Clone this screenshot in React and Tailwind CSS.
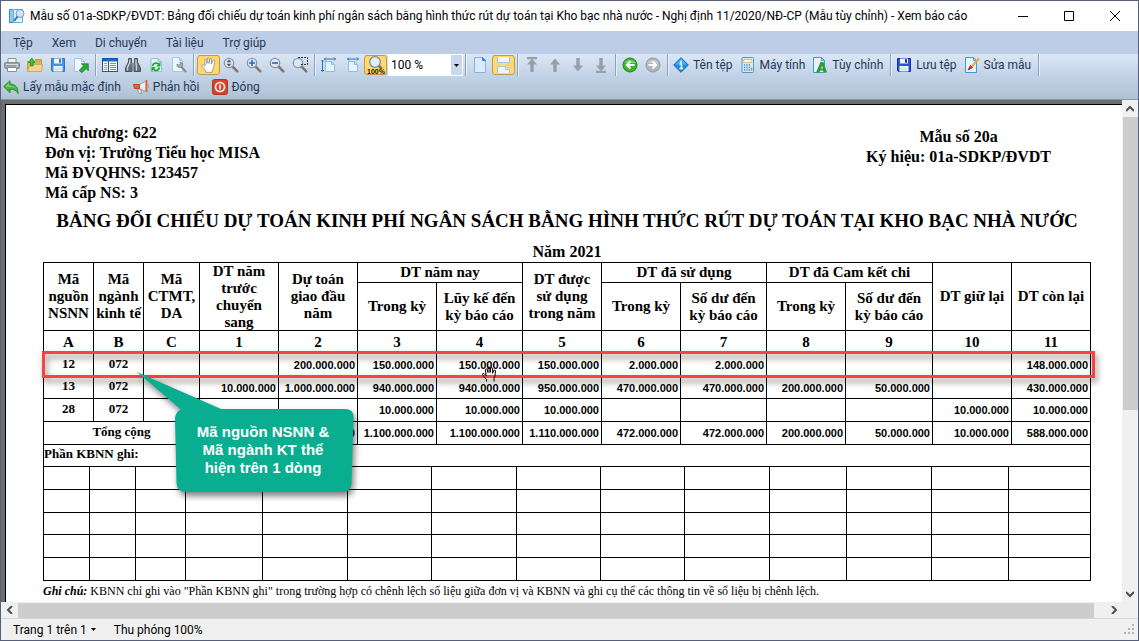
import React, { useState } from 'react';

const Icon = ({ children, size = 'w-4 h-4' }) => (
    <svg className={`${size} shrink-0`} viewBox="0 0 16 16" fill="none">
        {children}
    </svg>
);

const Page = ({ fill = '#e9f4fd', stroke = '#8fc0e0' }) => (
    <path d="M3 1.5h7l3.5 3.5v9.5H3z M10 1.5V5h3.5" fill={fill} stroke={stroke} />
);

const PrintIcon = () => (
    <Icon>
        <path d="M4 1.5h8V6H4z" fill="#f4f6f8" stroke="#8b949c" />
        <rect x="0.5" y="5.5" width="15" height="6" rx="1" fill="#9aa2aa" stroke="#858c93" />
        <path d="M2 7.5h12" stroke="#d5dade" />
        <path d="M3.5 10.5h9v4h-9z" fill="#fff" stroke="#858d95" />
        <rect x="12" y="8.5" width="2" height="1" fill="#e5eaf0" />
    </Icon>
);

const OpenIcon = () => (
    <Icon>
        <path d="M0.5 14.5v-10h7l1-2h6v12z" fill="#d8ae5c" stroke="#c39a4a" />
        <path d="M3 7.5h12.5l-1 7H0.5z" fill="#f3d592" stroke="#d2a954" />
        <path d="M3.5 9V5.5H1.5L4.8 1 8 5.5H6V9z" fill="#35c72c" stroke="#1b9818" strokeWidth="0.8" />
    </Icon>
);

const SaveIcon = ({ color = '#4a8fe6', dark = '#3273cc' }) => (
    <Icon>
        <path d="M1.5 1.5h13v13h-12l-1-1z" fill={color} stroke={dark} />
        <rect x="4" y="1.5" width="8" height="5" fill="#f1f6fc" />
        <rect x="9" y="2.2" width="2" height="3.5" fill={dark} />
        <rect x="3.5" y="9" width="9" height="5.5" fill="#f6f9fd" />
        <path d="M4.5 11h7M4.5 12.8h7" stroke="#b4cbe7" strokeWidth="0.8" />
    </Icon>
);

const ExportIcon = () => (
    <Icon>
        <path d="M1.5 1.5h7l3 3v10h-10z M8.5 1.5v3h3" fill="#eef7fd" stroke="#9fcae4" />
        <path d="M6.2 13.2l4.4-4.4-2.4-2H15.3v7l-2.2-2.3-4.4 4.2z" fill="#2aa53a" stroke="#14792a" strokeWidth="0.7" />
    </Icon>
);

const PanelIcon = () => (
    <Icon>
        <rect x="0.5" y="1.5" width="15" height="13" fill="#fff" stroke="#0e59b3" />
        <rect x="1" y="2" width="14" height="2.5" fill="#1768c9" />
        <path d="M6.5 4.5v10" stroke="#0e59b3" />
        <path d="M2.2 6.5h3M2.2 8.5h3M2.2 10.5h3M2.2 12.5h3" stroke="#5aa7e8" />
        <path d="M8 6.5h6M8 8.5h6M8 10.5h6M8 12.5h6" stroke="#7f93a8" />
    </Icon>
);

const FindIcon = () => (
    <Icon>
        <path d="M3.5 1.5h3V5l.5 2v7.500H.5V11L3.500 5z M9.500 1.500h3V5l3 6v3.500H9V7l.5-2z" fill="#66707a" stroke="#4a535c" />
        <rect x="6.500" y="6" width="3" height="3.500" fill="#88929b" />
        <path d="M4.800 2.500v3L2.500 10.500v3M11 2.500v3.500l.5 4v3.500" stroke="#d0d6dc" strokeWidth="1.300" />
    </Icon>
);

const RefreshIcon = () => (
    <Icon>
        <Page />
        <path d="M4.500 9c.5-3 4.500-4 6.500-1.500M11.500 10.500c-.5 3-4.500 4-6.500 1.500" stroke="#1faa2a" strokeWidth="1.800" />
        <path d="M12.500 5v4.500H8zM3.500 14.500V10H8z" fill="#1faa2a" />
    </Icon>
);

const SetupIcon = () => (
    <Icon>
        <path d="M1.5.5h7l3 3v11h-10z M8.5.5v3h3" fill="#eef7fd" stroke="#9fcae4" />
        <path d="M10 9.500l4.500 5" stroke="#858d95" strokeWidth="2.200" strokeLinecap="round" />
        <path d="M6 7.200a2.800 2.800 0 1 0 3-2.200l.4 2.300-1.400.9z" fill="#aab1b8" stroke="#747c84" strokeWidth="0.800" />
    </Icon>
);

const HandIcon = () => (
    <Icon>
        <path
            d="M4.800 15.300C4.500 12.800 1.500 10.500.8 8.800c-.3-1 .9-1.500 1.700-.8L4 9.300V3c0-1.200 1.700-1.200 1.800 0L6 6.500 6.300 1.600c.1-1.200 1.800-1.200 1.800 0v4.900l.7-4.400c.2-1.100 1.800-1 1.800.2l-.3 4.700 1.700-3.400c.4-1 1.900-.7 1.800.4-.3 3-.9 4.500-1.400 6.500-.4 1.700-1.200 2.700-1.200 4.800z"
            fill="#fff" stroke="#8a8a8a" strokeWidth="0.800"
        />
    </Icon>
);

const ZoomIcon = ({ children }) => (
    <Icon>
        <path d="M9.500 9.500l4.800 4.800" stroke="#8b7468" strokeWidth="2.500" strokeLinecap="round" />
        <circle cx="6" cy="6" r="4.700" fill="#d9e9f8" stroke="#8b96a2" strokeWidth="1.300" />
        {children}
    </Icon>
);

const FitIcon = ({ tall }) => (
    <Icon>
        <path d="M4.500 4.500h6l3 3v7h-9z M10.500 4.500v3h3" fill="#e6f3fc" stroke="#8fbfe2" />
        <path d="M3.500 2h11M5 .5L3.500 2 5 3.500M13 .5L14.500 2 13 3.500" stroke="#2d73b4" />
        {tall && <path d="M1.500 3v11.500M0 4.500L1.500 3 3 4.500M0 13l1.500 1.500L3 13" stroke="#2d73b4" />}
    </Icon>
);

const ActualSizeIcon = () => (
    <svg className="w-5 h-5 shrink-0" viewBox="0 0 20 20" fill="none">
        <path d="M12 10l4 4" stroke="#8b6f60" strokeWidth="2.500" />
        <circle cx="9" cy="7" r="5.300" fill="#e2effa" stroke="#7e8a97" strokeWidth="1.300" />
        <text x="1" y="19" fontFamily="Liberation Sans" fontWeight="700" fontSize="7" fill="#111">100%</text>
    </svg>
);

const SinglePageIcon = () => (
    <Icon>
        <path d="M2.500.5h8l3 3v12h-11z" fill="#dcebfb" stroke="#8ab0db" />
        <path d="M10.500.5v3h3z" fill="#3f7fd0" stroke="#3f7fd0" />
    </Icon>
);

const ContinuousIcon = () => (
    <Icon>
        <path d="M1.500 0v5.500h12V0" fill="#eef6fd" stroke="#a5c6df" />
        <path d="M1.500 16V9.500h8l4 3V16" fill="#eef6fd" stroke="#a5c6df" />
        <path d="M9.500 9.500v3h4" stroke="#a5c6df" />
    </Icon>
);

const ArrowIcon = ({ down, bar }) => (
    <Icon>
        <g transform={down ? 'rotate(180 8 8)' : undefined} fill="#989fa6">
            {bar && <path d="M3 0h10v2.200H3z" />}
            <path d="M8 1.500l5 6H9.700V15H6.300V7.500H3z" />
        </g>
    </Icon>
);

const RoundIcon = ({ color, edge, next }) => (
    <Icon>
        <circle cx="8" cy="8" r="7" fill={color} stroke={edge} />
        <path d="M2.500 6a6 5 0 0 1 11 0z" fill="#fff" opacity="0.350" />
        <path
            transform={next ? 'rotate(180 8 8)' : undefined}
            d="M12.500 8H5M8.500 4.500L4.800 8l3.700 3.500" stroke="#fff" strokeWidth="2"
        />
    </Icon>
);

const InfoIcon = () => (
    <Icon>
        <path d="M8 .7L15.300 8 8 15.300.7 8z" fill="#1a8fe6" stroke="#0b66b8" />
        <path d="M8 1.500L14 7.500H2z" fill="#6cc0f7" opacity="0.600" />
        <path d="M6.500 7h2v4.500M6.500 11.500h3.500" stroke="#fff" strokeWidth="1.400" />
        <circle cx="8" cy="4.800" r="1" fill="#fff" />
    </Icon>
);

const CalcIcon = () => (
    <Icon>
        <rect x="2" y=".5" width="11.500" height="15" rx="1" fill="#d3eafa" stroke="#4b9ad0" />
        <rect x="3.800" y="2.500" width="8" height="3" fill="#fff7df" stroke="#d8ad5e" strokeWidth="0.700" />
        <path d="M4 8h6M4 10.500h6M4 13h6" stroke="#5f8db5" strokeWidth="1.300" strokeDasharray="1.300 1" />
        <path d="M11.500 10.500v3.500" stroke="#ee9322" strokeWidth="1.500" />
    </Icon>
);

const CustomIcon = () => (
    <Icon>
        <path d="M1.500.5h8l3 3v12h-11z M9.500.5v3h3" fill="#e6f4fd" stroke="#3a9bd8" />
        <path d="M4 15.500L8.500 5h3L15 15.500h-3.500l-.5-2H8.200l-.6 2z M9 11.500h1.800L10 8.500z" fill="#2f9b35" fillRule="evenodd" />
    </Icon>
);

const EditIcon = () => (
    <Icon>
        <path d="M1.500.5h8l3 3v12h-11z M9.500.5v3h3" fill="#e6f4fd" stroke="#3a9bd8" />
        <path d="M4 13l2.500-4.500 2 2z" fill="#d23a22" stroke="#b62d1a" />
        <path d="M8 9.500L14.800 1.500" stroke="#e7a93f" strokeWidth="2.200" />
    </Icon>
);

const UndoIcon = () => (
    <Icon>
        <path d="M.7 7.500L7 1.800V5c5 .2 8.500 3.500 8 9.500-1.500-3-4-4.500-8-4.300v3.500z" fill="#45b53c" stroke="#2a8a2a" />
        <path d="M2.500 7.300L6 4v2.500c3 0 5 1 6.500 2.500C10 8 7 7.800 5 8z" fill="#9be08d" opacity="0.700" />
    </Icon>
);

const FeedbackIcon = () => (
    <Icon>
        <path d="M4 10h3.500l1.500 4.500H6z" fill="#d9dee3" stroke="#9aa3ac" />
        <path d="M6.500 5.500L13 2v10.500L6.500 9.500z" fill="#e9edf1" stroke="#9aa3ac" />
        <path d="M.500 5.500h6v4h-5z" fill="#e8622a" stroke="#c04a1a" />
        <path d="M13.500 1v12" stroke="#e8622a" strokeWidth="1.800" />
        <path d="M15.200 5.500v3.500" stroke="#9aa3ac" />
    </Icon>
);

const CloseIcon = () => (
    <Icon>
        <rect x=".5" y=".5" width="15" height="15" rx="2" fill="#d9432a" stroke="#b4301c" />
        <circle cx="8" cy="8" r="4.500" stroke="#fff" strokeWidth="1.600" />
        <path d="M8 5.500v5" stroke="#fff" strokeWidth="1.600" />
    </Icon>
);

const TitleIcon = () => (
    <Icon>
        <path d="M.5 1.500h3l1 1h3v12H.5z" fill="#8cc7ee" stroke="#3f8fcb" />
        <path d="M4.500 1.500h9v13h-9z" fill="#e3f2fc" stroke="#67b0e0" />
        <circle cx="11" cy="5.500" r="4" fill="#cfe7f8" stroke="#5e9ecb" />
        <path d="M8.500 8.500l-3.500 4.500" stroke="#2b78b8" strokeWidth="2" />
    </Icon>
);

const ToolButton = ({ label, active, children }) => (
    <button
        aria-label={label}
        className={`w-[23px] h-5 shrink-0 flex items-center justify-center rounded-[3px] ${active ? 'bg-[#ffd970] border border-[#c09a4a]' : 'pr-px'}`}
    >
        {children}
    </button>
);

const TextButton = ({ icon, children }) => (
    <button className="h-5 px-[2px] shrink-0 flex items-center gap-1 mr-[3px] whitespace-nowrap">
        {icon}
        {children}
    </button>
);

const Separator = () => (
    <span className="w-[6px] h-[22px] shrink-0 flex justify-center">
        <span className="w-px bg-[#8da3bd]" />
        <span className="w-px bg-[#e8f0f9]" />
    </span>
);

const menus = ['Tệp', 'Xem', 'Di chuyển', 'Tài liệu', 'Trợ giúp'];

const Toolbar = () => {
    const [zoom, setZoom] = useState('100 %');

    return (
        <div className="bg-linear-to-b from-[#dbe7f5] via-[#c1d1e6] to-[#b0c1d6] border-b border-[#7f96ad] pb-px text-[#1e395b]">
            <div className="flex items-center h-[22px]">
                <ToolButton label="In"><PrintIcon /></ToolButton>
                <ToolButton label="Mở"><OpenIcon /></ToolButton>
                <ToolButton label="Lưu"><SaveIcon /></ToolButton>
                <ToolButton label="Xuất khẩu"><ExportIcon /></ToolButton>
                <Separator />
                <ToolButton label="Mục lục"><PanelIcon /></ToolButton>
                <ToolButton label="Tìm kiếm"><FindIcon /></ToolButton>
                <ToolButton label="Nạp lại"><RefreshIcon /></ToolButton>
                <ToolButton label="Thiết lập trang"><SetupIcon /></ToolButton>
                <Separator />
                <ToolButton label="Kéo trang" active><HandIcon /></ToolButton>
                <ToolButton label="Thu phóng">
                    <ZoomIcon><path d="M6 2.500L8.500 5.300h-5zM6 9.500L3.500 6.700h5z" fill="#4a5a6b" /></ZoomIcon>
                </ToolButton>
                <ToolButton label="Phóng to">
                    <ZoomIcon><path d="M6 3v6M3 6h6" stroke="#2f68ad" strokeWidth="1.600" /></ZoomIcon>
                </ToolButton>
                <ToolButton label="Thu nhỏ">
                    <ZoomIcon><path d="M3 6h6" stroke="#2f68ad" strokeWidth="1.600" /></ZoomIcon>
                </ToolButton>
                <ToolButton label="Thu phóng vùng chọn">
                    <ZoomIcon><path d="M6 .5h9.500v7H9" stroke="#333" strokeDasharray="2 1" /></ZoomIcon>
                </ToolButton>
                <Separator />
                <ToolButton label="Cả trang"><FitIcon tall /></ToolButton>
                <ToolButton label="Vừa chiều rộng"><FitIcon /></ToolButton>
                <ToolButton label="Kích thước thực" active><ActualSizeIcon /></ToolButton>
                <div className="relative w-[75px] h-[22px] ml-px shrink-0">
                    <select
                        aria-label="Tỷ lệ"
                        value={zoom}
                        onChange={(e) => setZoom(e.target.value)}
                        className="appearance-none w-full h-full bg-white pl-[3px] text-black rounded-none"
                    >
                        <option>50 %</option>
                        <option>100 %</option>
                        <option>200 %</option>
                    </select>
                    <span className="absolute right-px top-px w-[11px] h-5 bg-[#c9d8ea] flex items-center justify-center pointer-events-none">
                        <svg className="w-[5px] h-[3px]" viewBox="0 0 5 3"><path d="M0 0h5L2.500 3z" /></svg>
                    </span>
                </div>
                <Separator />
                <ToolButton label="Một trang"><SinglePageIcon /></ToolButton>
                <ToolButton label="Liên tục" active><ContinuousIcon /></ToolButton>
                <Separator />
                <ToolButton label="Trang đầu"><ArrowIcon bar /></ToolButton>
                <ToolButton label="Trang trước"><ArrowIcon /></ToolButton>
                <ToolButton label="Trang sau"><ArrowIcon down /></ToolButton>
                <ToolButton label="Trang cuối"><ArrowIcon down bar /></ToolButton>
                <Separator />
                <ToolButton label="Quay lại"><RoundIcon color="#35b92b" edge="#1c8518" /></ToolButton>
                <ToolButton label="Tiến tới"><RoundIcon color="#b0b5ba" edge="#9299a0" next /></ToolButton>
                <Separator />
                <TextButton icon={<InfoIcon />}>Tên tệp</TextButton>
                <TextButton icon={<CalcIcon />}>Máy tính</TextButton>
                <TextButton icon={<CustomIcon />}>Tùy chỉnh</TextButton>
                <Separator />
                <TextButton icon={<SaveIcon color="#2d4fe0" dark="#1730a8" />}>Lưu tệp</TextButton>
                <TextButton icon={<EditIcon />}>Sửa mẫu</TextButton>
                <Separator />
            </div>
            <div className="flex items-center h-[22px] gap-[5px]">
                <TextButton icon={<UndoIcon />}>Lấy mẫu mặc định</TextButton>
                <TextButton icon={<FeedbackIcon />}>Phản hồi</TextButton>
                <TextButton icon={<CloseIcon />}>Đóng</TextButton>
            </div>
        </div>
    );
};

const rows = [
    ['12', '072', '', '', '200.000.000', '150.000.000', '150.000.000', '150.000.000', '2.000.000', '2.000.000', '', '', '', '148.000.000'],
    ['13', '072', '', '10.000.000', '1.000.000.000', '940.000.000', '940.000.000', '950.000.000', '470.000.000', '470.000.000', '200.000.000', '50.000.000', '', '430.000.000'],
    ['28', '072', '', '', '', '10.000.000', '10.000.000', '10.000.000', '', '', '', '', '10.000.000', '10.000.000'],
];

const totals = ['', '1.000.000.000', '1.100.000.000', '1.100.000.000', '1.110.000.000', '472.000.000', '472.000.000', '200.000.000', '50.000.000', '10.000.000', '588.000.000'];

const codes = ['A', 'B', 'C', '1', '2', '3', '4', '5', '6', '7', '8', '9', '10', '11'];

const cell = 'border-r border-b border-black p-0';
const label = 'border-r border-b border-black p-0 pb-[3px]';
const amount = 'border-r border-b border-black p-0 pr-[2px] text-right text-[11px] font-[Liberation_Sans,sans-serif]';

const ReportTable = () => (
    <table className="w-full table-fixed border-separate border-spacing-0 border-t border-l border-black font-bold text-center text-[13px] leading-4">
        <colgroup>
            <col className="w-[50px]" />
            <col className="w-[50px]" />
            <col className="w-[56px]" />
            <col className="w-[79px]" />
            <col className="w-[79px]" />
            <col className="w-[79px]" />
            <col className="w-[86px]" />
            <col className="w-[79px]" />
            <col className="w-[79px]" />
            <col className="w-[86px]" />
            <col className="w-[79px]" />
            <col className="w-[87px]" />
            <col className="w-[79px]" />
            <col className="w-[79px]" />
        </colgroup>
        <thead className="text-[15px] leading-[17px]">
            <tr className="h-5">
                <th rowSpan="2" className={cell}>Mã nguồn NSNN</th>
                <th rowSpan="2" className={cell}>Mã ngành kinh tế</th>
                <th rowSpan="2" className={cell}>Mã CTMT, DA</th>
                <th rowSpan="2" className={cell}>
                    <div className="-my-px">DT năm trước<br />chuyển sang</div>
                </th>
                <th rowSpan="2" className={cell}>Dự toán giao đầu năm</th>
                <th colSpan="2" className={cell}>DT năm nay</th>
                <th rowSpan="2" className={cell}>DT được<br />sử dụng<br />trong năm</th>
                <th colSpan="2" className={cell}>DT đã sử dụng</th>
                <th colSpan="2" className={cell}>DT đã Cam kết chi</th>
                <th rowSpan="2" className={cell}>DT giữ lại</th>
                <th rowSpan="2" className={cell}>DT còn lại</th>
            </tr>
            <tr className="h-12">
                <th className={cell}>Trong kỳ</th>
                <th className={cell}>Lũy kế đến<br />kỳ báo cáo</th>
                <th className={cell}>Trong kỳ</th>
                <th className={cell}>Số dư đến<br />kỳ báo cáo</th>
                <th className={cell}>Trong kỳ</th>
                <th className={cell}>Số dư đến<br />kỳ báo cáo</th>
            </tr>
            <tr className="h-[23px]">
                {codes.map((code) => <th key={code} className={cell}>{code}</th>)}
            </tr>
        </thead>
        <tbody>
            {rows.map((row) => (
                <tr key={row[0]} className="h-[23px] even:h-[22px]">
                    {row.map((value, i) => (
                        <td key={i} className={i < 3 ? label : amount}>{value}</td>
                    ))}
                </tr>
            ))}
            <tr className="h-[23px]">
                <td colSpan="3" className={label}>Tổng cộng</td>
                {totals.map((value, i) => <td key={i} className={amount}>{value}</td>)}
            </tr>
            <tr className="h-[22px]">
                <td colSpan="14" className={`${label} text-left`}>Phần KBNN ghi:</td>
            </tr>
        </tbody>
    </table>
);

const BlankTable = () => (
    <table className="w-full table-fixed border-separate border-spacing-0 border-l border-black">
        <colgroup>
            <col className="w-[46px]" />
            <col className="w-[46px]" />
            <col className="w-[50px]" />
            <col className="w-[77px]" />
            <col className="w-[85px]" />
            <col className="w-[84px]" />
            <col className="w-[85px]" />
            <col className="w-[84px]" />
            <col className="w-[84px]" />
            <col className="w-[85px]" />
            <col className="w-[77px]" />
            <col className="w-[85px]" />
            <col className="w-[77px]" />
            <col className="w-[82px]" />
        </colgroup>
        <tbody>
            {[0, 1, 2, 3, 4].map((r) => (
                <tr key={r} className="h-[23px] nth-3:h-[22px]">
                    {codes.map((code) => <td key={code} className={cell} />)}
                </tr>
            ))}
        </tbody>
    </table>
);

const Callout = () => (
    <div className="absolute left-[94px] top-[110px] w-[217px] h-[121px]">
        <svg className="absolute inset-0 w-full h-full overflow-visible drop-shadow-[2px_4px_3px_rgba(0,0,0,0.5)]" viewBox="0 0 217 121">
            <path
                d="M0 0L84 37H208q9 0 8.500 9l-2 65q-.5 9-9 9H49q-9 0-9.500-9L38 47q0-7 6-9.500z"
                fill="#09ae90"
            />
        </svg>
        <p className="absolute right-0 bottom-4 w-[182px] text-center text-white font-bold text-[15px] leading-[18px] font-[Liberation_Sans,sans-serif]">
            Mã nguồn NSNN &amp;<br />Mã ngành KT thể<br />hiện trên 1 dòng
        </p>
    </div>
);

const HandCursor = () => (
    <svg className="absolute left-[439px] top-[104px] w-4 h-4" viewBox="0 0 16 16">
        <path
            d="M4.500 15.500v-2L2 10.500.5 8.500q0-1.500 1.500-1L4 9.500 3.500 3.500q.7-1.200 1.700 0L6 6.500V1.500q1-1.300 2 0v5l.8-4.500q1-1 1.900.3l-.2 5 1.300-3q1.200-.8 1.700.5l-.5 4.700-1 3v3"
            fill="none" stroke="#000"
        />
    </svg>
);

const Report = () => (
    <div className="flex-1 min-w-0 bg-[#6d6d6d] pt-1 pl-1 overflow-hidden">
        <div className="h-full bg-white border-t border-l border-black pl-[37px] pr-[31px] pt-[18px] text-black font-[Liberation_Serif,serif]">
            <div className="flex justify-between font-bold text-base leading-5 pl-[2px] pr-10">
                <div className="h-20">
                    <p>Mã chương: 622</p>
                    <p>Đơn vị: Trường Tiểu học MISA</p>
                    <p>Mã ĐVQHNS: 123457</p>
                    <p>Mã cấp NS: 3</p>
                </div>
                <div className="text-center pt-1">
                    <p>Mẫu số 20a</p>
                    <p>Ký hiệu: 01a-SDKP/ĐVDT</p>
                </div>
            </div>
            <h1 className="font-bold text-[19px] leading-7 text-center whitespace-nowrap pt-1">
                BẢNG ĐỐI CHIẾU DỰ TOÁN KINH PHÍ NGÂN SÁCH BẰNG HÌNH THỨC RÚT DỰ TOÁN TẠI KHO BẠC NHÀ NƯỚC
            </h1>
            <p className="font-bold text-base leading-5 text-center pt-[7px]">Năm 2021</p>
            <div className="relative">
                <ReportTable />
                <BlankTable />
                <div className="absolute -left-px -right-1 top-[89px] h-[27px] border-3 border-[#f94343] drop-shadow-[2px_4px_3px_rgba(0,0,0,0.5)]" />
                <Callout />
                <HandCursor />
            </div>
            <p className="text-xs leading-5">
                <b><i>Ghi chú:</i></b> KBNN chỉ ghi vào "Phần KBNN ghi" trong trường hợp có chênh lệch số liệu giữa đơn vị và KBNN và ghi cụ thể các thông tin về số liệu bị chênh lệch.
            </p>
        </div>
    </div>
);

const Chevron = ({ d }) => (
    <svg className="w-2 h-2" viewBox="0 0 8 8" fill="none"><path d={d} stroke="#505050" strokeWidth="2" /></svg>
);

const App = () => {
    return (
        <div className="h-screen flex flex-col bg-[#f0f0f0] border border-[#56607a] text-xs font-[Roboto,sans-serif] overflow-hidden">
            <header className="flex items-center h-[30px] bg-white pl-2 text-black">
                <TitleIcon />
                <h2 className="pl-[5px] whitespace-nowrap">
                    Mẫu số 01a-SDKP/ĐVDT: Bảng đối chiếu dự toán kinh phí ngân sách bằng hình thức rút dự toán tại Kho bạc nhà nước - Nghị định 11/2020/NĐ-CP (Mẫu tùy chỉnh) - Xem báo cáo
                </h2>
                <div className="ml-auto flex">
                    <button aria-label="Thu nhỏ cửa sổ" className="w-[46px] h-[30px] flex items-center justify-center">
                        <svg className="w-[10px] h-[10px]" viewBox="0 0 10 10" stroke="#000"><path d="M0 5.500h10" /></svg>
                    </button>
                    <button aria-label="Phóng to cửa sổ" className="w-[46px] h-[30px] flex items-center justify-center">
                        <svg className="w-[10px] h-[10px]" viewBox="0 0 10 10" fill="none" stroke="#000"><path d="M.5.5h9v9h-9z" /></svg>
                    </button>
                    <button aria-label="Đóng cửa sổ" className="w-[46px] h-[30px] flex items-center justify-center">
                        <svg className="w-[10px] h-[10px]" viewBox="0 0 10 10" stroke="#000"><path d="M0 0l10 10M10 0L0 10" /></svg>
                    </button>
                </div>
            </header>

            <nav className="flex items-center gap-[19px] h-[23px] px-3 bg-[#bdcde5] text-[#1e395b]">
                {menus.map((menu) => <button key={menu}>{menu}</button>)}
            </nav>

            <Toolbar />

            <div className="flex flex-1 min-h-0">
                <Report />
                {/* vertical scrollbar */}
                <div className="w-4 shrink-0 flex flex-col items-center">
                    <span className="h-[17px] flex items-center"><Chevron d="M0 6l4-4 4 4" /></span>
                    <span className="w-[15px] flex-[5] bg-[#cdcdcd]" />
                    <span className="flex-[3] w-px" />
                    <span className="h-[17px] flex items-center"><Chevron d="M0 2l4 4 4-4" /></span>
                </div>
            </div>

            {/* horizontal scrollbar */}
            <div className="flex items-center h-4 pr-4">
                <span className="w-[17px] flex justify-center"><Chevron d="M6 0L2 4l4 4" /></span>
                <span className="flex-1 h-[15px] bg-[#cdcdcd]" />
                <span className="w-7 flex justify-end pr-1"><Chevron d="M2 0l4 4-4 4" /></span>
            </div>

            <footer className="flex items-center h-[22px] border-t border-[#d7d7d7] pl-3 pr-[2px] text-black">
                <button className="flex items-center gap-1">
                    Trang 1 trên 1
                    <svg className="w-[5px] h-[3px]" viewBox="0 0 5 3"><path d="M0 0h5L2.500 3z" /></svg>
                </button>
                <span className="pl-[18px]">Thu phóng 100%</span>
                <svg className="w-3 h-3 ml-auto self-end mb-1" viewBox="0 0 12 12" fill="#b5b5b5">
                    <path d="M8 0h2v2H8zM8 4h2v2H8zM4 4h2v2H4zM8 8h2v2H8zM4 8h2v2H4zM0 8h2v2H0z" />
                </svg>
            </footer>
        </div>
    );
};

export default App;
